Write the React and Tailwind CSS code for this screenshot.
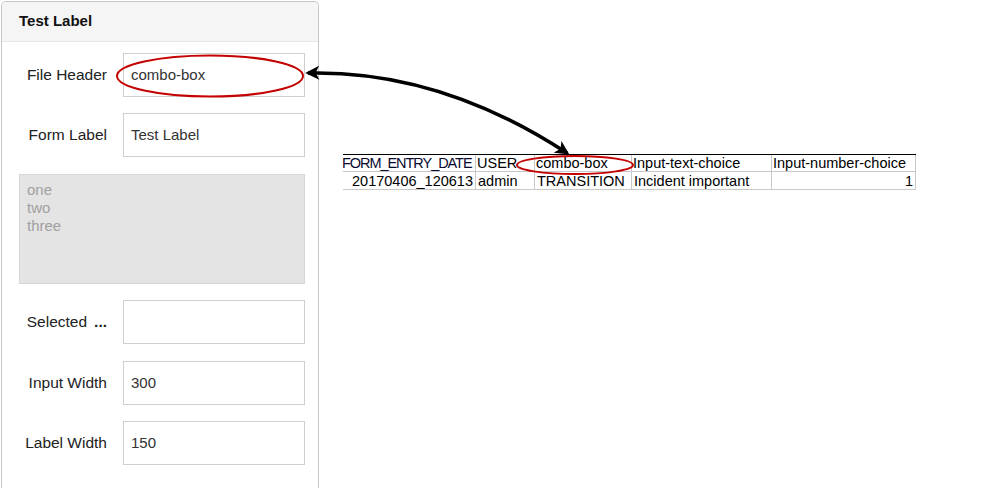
import React from 'react';

const FONT = { fontFamily: '"Liberation Sans", Arial, sans-serif' };

function Field({ label, value, dots }) {
  return (
    <div className="flex items-center">
      <div className="w-[104px] text-right text-[15.5px] text-[#222]">
        {label}
        {dots && <span className="ml-[7px] font-bold">...</span>}
      </div>
      <div className="ml-[16px] flex h-[44px] w-[182px] items-center border border-[#cfcfcf] bg-white px-[7px] text-[15px] text-[#333]">
        {value}
      </div>
    </div>
  );
}

function SettingsPanel() {
  return (
    <div className="mt-[1px] ml-[1px] h-[487px] w-[318px] shrink-0 rounded-t-[5px] border border-b-0 border-[#c8c8c8] bg-white">
      <div className="flex h-[40px] items-center rounded-t-[5px] border-b border-[#e6e6e6] bg-[#f5f5f5] pl-[17px] text-[15px] font-bold text-[#111]">
        Test Label
      </div>
      <div className="flex flex-col pt-[11px] pl-[1px]">
        <Field label="File Header" value="combo-box" />
        <div className="mt-[16px]">
          <Field label="Form Label" value="Test Label" />
        </div>
        <div className="mt-[17px] ml-[16px] h-[110px] w-[286px] border border-[#d6d6d6] bg-[#e4e4e4] px-[7px] pt-[6px] text-[15px] leading-[18px] text-[#a0a0a0]">
          <div>one</div>
          <div>two</div>
          <div>three</div>
        </div>
        <div className="mt-[16px]">
          <Field label="Selected" value="" dots />
        </div>
        <div className="mt-[17px]">
          <Field label="Input Width" value="300" />
        </div>
        <div className="mt-[16px]">
          <Field label="Label Width" value="150" />
        </div>
      </div>
    </div>
  );
}

function Sheet() {
  const cols = [132, 59, 97, 140, 145];
  const head = ['FORM_ENTRY_DATE', 'USER', 'combo-box', 'Input-text-choice', 'Input-number-choice'];
  const row = [
    { v: '20170406_120613', r: true },
    { v: 'admin' },
    { v: 'TRANSITION' },
    { v: 'Incident important' },
    { v: '1', r: true },
  ];
  return (
    <div className="mt-[154px] ml-[24px] text-[14.5px] leading-[17px] text-black">
      <div className="flex border-t border-black">
        {head.map((h, i) => (
          <div
            key={h}
            style={{ width: cols[i] }}
            className={`h-[17px] whitespace-nowrap border-b border-[#c8c8c8] pl-[1px] ${i > 0 ? 'border-l' : ''} ${i === 4 ? 'border-r' : ''}`}
          >
            {i === 0 ? (
              <span className="-ml-[2px] tracking-[-1.05px] text-[#0a0a30]">{h}</span>
            ) : (
              h
            )}
          </div>
        ))}
      </div>
      <div className="flex">
        {row.map((c, i) => (
          <div
            key={i}
            style={{ width: cols[i] }}
            className={`h-[18px] whitespace-nowrap border-b border-[#c8c8c8] px-[2px] pt-[1px] ${c.r ? 'text-right' : 'text-left'} ${i > 0 ? 'border-l' : ''} ${i === 4 ? 'border-r' : ''}`}
          >
            {c.v}
          </div>
        ))}
      </div>
    </div>
  );
}

export default function App() {
  return (
    <div className="relative h-[488px] w-[989px] overflow-hidden bg-white" style={FONT}>
      <div className="flex">
        <SettingsPanel />
        <Sheet />
      </div>
      <svg className="pointer-events-none absolute inset-0" width="989" height="488" viewBox="0 0 989 488">
        <defs>
          <marker id="head" viewBox="0 0 10 10" refX="8" refY="5" markerWidth="4.2" markerHeight="4" orient="auto-start-reverse">
            <path d="M0 0 L10 5 L0 10 L2.5 5 Z" fill="#000" />
          </marker>
        </defs>
        <ellipse cx="210" cy="76" rx="93" ry="20.5" fill="none" stroke="#c40000" strokeWidth="2" />
        <ellipse cx="575" cy="165" rx="58" ry="9" fill="none" stroke="#c40000" strokeWidth="2" />
        <path
          d="M308 73 Q440 70 567 153"
          fill="none"
          stroke="#000"
          strokeWidth="3.5"
          markerStart="url(#head)"
          markerEnd="url(#head)"
        />
      </svg>
    </div>
  );
}
